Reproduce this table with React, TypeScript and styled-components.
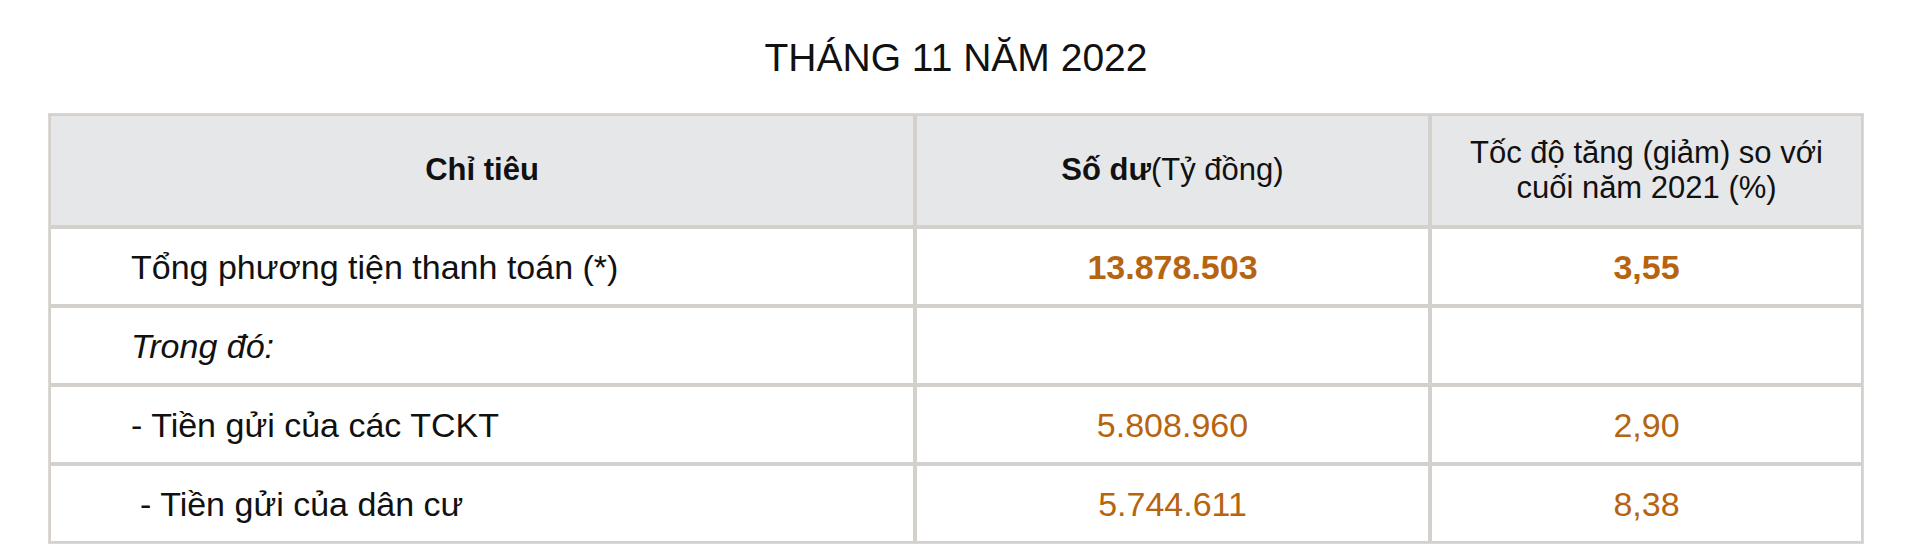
import React from "react";
import styled, { createGlobalStyle } from "styled-components";

const GlobalStyle = createGlobalStyle`
  html, body {
    margin: 0;
    padding: 0;
    background: #ffffff;
  }
  body {
    font-family: "Liberation Sans", Arial, Helvetica, sans-serif;
    color: #111111;
  }
`;

const Page = styled.div`
  padding: 38px 56px 0 48px;
  display: flex;
  flex-direction: column;
`;

const Title = styled.h2`
  margin: 0 0 36px 0;
  font-size: 39px;
  line-height: 39px;
  font-weight: 400;
  text-align: center;
  color: #111111;
`;

const Table = styled.div`
  display: grid;
  grid-template-columns: 866px 515px 433px;
  border: 1px solid #dcd8d4;
`;

const HeadCell = styled.div`
  border: 2px solid #d4d0cc;
  background: #e6e7e9;
  height: 107px;
  display: flex;
  align-items: center;
  justify-content: center;
  text-align: center;
  padding: 0 30px 2px;
  font-size: 31px;
  line-height: 35px;
  color: #111111;
`;

const Strong = styled.b`
  font-weight: 700;
`;

const Cell = styled.div<{ $align?: "left" | "center"; $indent?: number }>`
  border: 2px solid #d4d0cc;
  background: #ffffff;
  height: 75px;
  display: flex;
  align-items: center;
  justify-content: ${(p) => (p.$align === "left" ? "flex-start" : "center")};
  padding-left: ${(p) => (p.$align === "left" ? `${80 + (p.$indent || 0)}px` : "0")};
  font-size: 34px;
  line-height: 40px;
  color: #111111;
  white-space: pre;
`;

const Label = styled.span<{ $italic?: boolean }>`
  font-style: ${(p) => (p.$italic ? "italic" : "normal")};
`;

const Value = styled.span<{ $bold?: boolean }>`
  color: #b6640f;
  font-weight: ${(p) => (p.$bold ? 700 : 400)};
`;

type Row = {
  label: string;
  italic?: boolean;
  indent?: number;
  balance?: string;
  growth?: string;
  bold?: boolean;
};

const rows: Row[] = [
  { label: "Tổng phương tiện thanh toán (*)", balance: "13.878.503", growth: "3,55", bold: true },
  { label: "Trong đó:", italic: true },
  { label: "- Tiền gửi của các TCKT", balance: "5.808.960", growth: "2,90" },
  { label: "- Tiền gửi của dân cư", indent: 9, balance: "5.744.611", growth: "8,38" },
];

export default function App() {
  return (
    <>
      <GlobalStyle />
      <Page>
        <Title>THÁNG 11 NĂM 2022</Title>
        <Table>
          <HeadCell>
            <Strong>Chỉ tiêu</Strong>
          </HeadCell>
          <HeadCell>
            <span>
              <Strong>Số dư</Strong>(Tỷ đồng)
            </span>
          </HeadCell>
          <HeadCell>Tốc độ tăng (giảm) so với cuối năm 2021 (%)</HeadCell>
          {rows.map((r) => (
            <React.Fragment key={r.label}>
              <Cell $align="left" $indent={r.indent}>
                <Label $italic={r.italic}>{r.label}</Label>
              </Cell>
              <Cell>
                {r.balance && <Value $bold={r.bold}>{r.balance}</Value>}
              </Cell>
              <Cell>
                {r.growth && <Value $bold={r.bold}>{r.growth}</Value>}
              </Cell>
            </React.Fragment>
          ))}
        </Table>
      </Page>
    </>
  );
}
